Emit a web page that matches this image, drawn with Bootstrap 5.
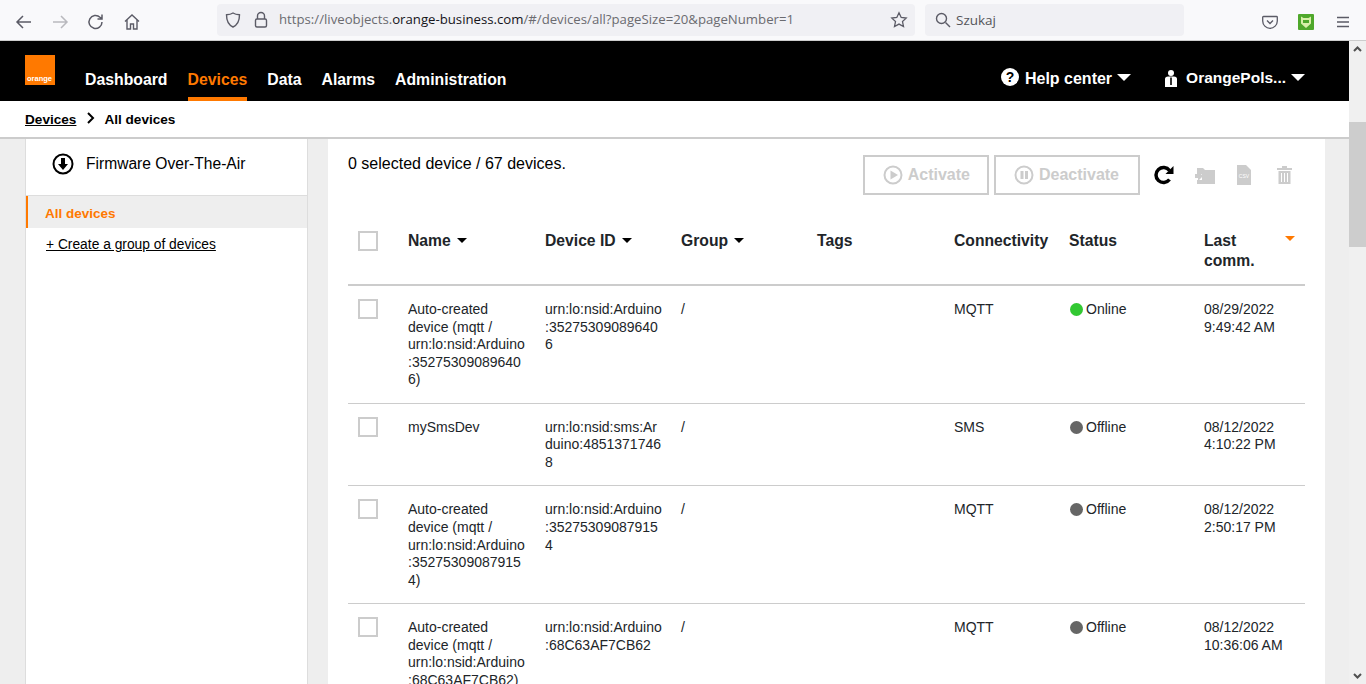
<!DOCTYPE html>
<html lang="en">
<head>
<meta charset="UTF-8">
<title>Live Objects - Devices</title>
<link href="https://cdn.jsdelivr.net/npm/bootstrap@5.3.0/dist/css/bootstrap.min.css" rel="stylesheet">
<style>
html, body { height: 684px; overflow: hidden; }
body { font-family: "Liberation Sans", Arial, sans-serif; font-size: 14px; color: #000; background: #eee; }

/* browser toolbar */
.ff-bar { height: 41px; background: #f9f9fb; border-bottom: 1px solid #ccc; padding-left: 14px; }
.ff-btn { width: 20px; height: 20px; flex: none; }
.ff-url { width: 698px; height: 32px; margin-left: 75px; margin-top: -4px; background: #f0f0f4; border-radius: 4px; font-family: "Open Sans", sans-serif; font-size: 13.2px; color: #6b6b70; padding: 0 7px; }
.ff-url b { font-weight: 400; color: #15141a; }
.ff-lock { margin-left: 11px; }
.ff-text { margin-left: 10px; }
.ff-search { width: 259px; height: 32px; margin-left: 10px; margin-top: -4px; background: #f0f0f4; border-radius: 4px; font-family: "Open Sans", sans-serif; font-size: 13.5px; color: #55555a; padding-left: 10px; }
.ff-search span { margin-left: 5px; }
.ff-green { margin-left: 20px; }
.ff-menu { margin-left: 22px; margin-right: 16px; }

/* site */
.lo-top { height: 60px; background: #000; padding-left: 25px; }
.lo-logo { width: 30px; height: 30px; background: #ff7900; margin-top: 14px; color: #fff; font-size: 7.5px; font-weight: 700; line-height: 1; padding: 0 0 3px 2px; }
.lo-nav { margin-left: 30px; }
.lo-nav a { display: block; height: 60px; padding-top: 27px; margin-right: 20px; font-size: 15.8px; font-weight: 700; color: #fff; text-decoration: none; }
.lo-nav a.on { color: #ff7900; border-bottom: 4px solid #ff7900; }
.lo-right { font-size: 16px; line-height: 20px; font-weight: 700; color: #fff; padding-top: 27px; padding-right: 44px; }
.lo-help { margin-left: 6px; margin-top: 1px; }
.lo-user { margin-left: 34px; margin-top: 2px; }
.lo-name { margin-left: 9px; font-size: 15.5px; }
.lo-caret { width: 0; height: 0; margin: 6px 0 0 5px; border-left: 7px solid transparent; border-right: 7px solid transparent; border-top: 7px solid #fff; }
.lo-crumb { height: 38px; background: #fff; border-bottom: 2px solid #ccc; padding-left: 25px; font-size: 13.6px; font-weight: 700; line-height: 37px; }
.lo-crumb a { color: #000; }
.lo-chev { margin: 10px 9px 0 10px; }
.lo-side { width: 283px; height: 545px; margin-left: 25px; background: #fff; border-left: 1px solid #ddd; border-right: 1px solid #ddd; flex: none; }
.lo-fota { height: 57px; border-bottom: 1px solid #ddd; padding: 0 0 6px 26px; font-size: 15.6px; }
.lo-fota span { margin-left: 12px; }
.lo-active { height: 32px; background: #eee; border-left: 2px solid #ff7900; padding-left: 17px; color: #ff7900; font-size: 13.5px; font-weight: 700; line-height: 35px; }
.lo-add { display: block; margin: 7px 0 0 20px; color: #000; font-size: 13.8px; }
.lo-main { width: 997px; height: 545px; margin-left: 20px; background: #fff; padding: 0 20px; flex: none; overflow: hidden; }
.lo-count { font-size: 16px; padding-top: 13px; }
.lo-tools { padding-top: 16px; }
.lo-act { height: 40px; border: 2px solid #ccc; color: #ccc; font-size: 16px; font-weight: 700; padding: 0 17px 0 18px; }
.lo-act svg { margin-right: 5px; }
.lo-act + .lo-act { margin-left: 5px; padding-right: 19px; }
.ic-reload { margin-left: 14px; }
.ic-move { margin-left: 21px; }
.ic-csv { margin-left: 22px; }
.ic-trash { margin-left: 26px; margin-right: 13px; }

.lo-grid { table-layout: fixed; width: 957px; margin: 0; }
.lo-grid col:nth-child(1) { width: 60px; }
.lo-grid col:nth-child(2) { width: 137px; }
.lo-grid col:nth-child(3) { width: 136px; }
.lo-grid col:nth-child(4) { width: 136px; }
.lo-grid col:nth-child(5) { width: 137px; }
.lo-grid col:nth-child(6) { width: 115px; }
.lo-grid col:nth-child(7) { width: 135px; }
.lo-grid col:nth-child(8) { width: 101px; }
.lo-grid td, .lo-grid th { vertical-align: top; border: 0; }
.lo-grid th { font-size: 15.7px; line-height: 19.6px; padding: 36px 0 0 0; height: 90px; border-bottom: 2px solid #ccc; }
.lo-grid td { font-size: 14px; line-height: 17.6px; padding: 15px 18px 13.8px 0; border-bottom: 1px solid #ccc; overflow-wrap: anywhere; }
.lo-box { display: block; width: 20px; height: 20px; margin: 0 0 0 10px; border: 2px solid #ccc; }
.lo-grid td .lo-box { margin-top: -2px; }
.lo-sort { display: inline-block; width: 0; height: 0; margin: 0 0 3px 2px; border-left: 5px solid transparent; border-right: 5px solid transparent; border-top: 5px solid #000; }
.lo-sort.lo-cur { float: right; margin: 5px 10px 0 0; border-top-color: #ff7900; }
.lo-dot { display: inline-block; width: 13px; height: 13px; margin: 0 3px 0 1px; border-radius: 50%; background: #666; vertical-align: -2px; }
.lo-dot.up { background: #32c832; }
.lo-scroll { width: 17px; flex: none; background: #f0f0f0; position: relative; }
.lo-thumb { display: block; width: 17px; height: 125px; margin-top: 81px; background: #cdcdcd; }
.lo-arrow { position: absolute; top: 5px; left: 4px; }
.lo-arrow.lo-down { top: auto; bottom: 5px; }
</style>
</head>
<body>

<div class="ff-bar d-flex align-items-center pt-1">
    <svg class="ff-btn" viewBox="0 0 20 20" fill="none" stroke="#5b5b66" stroke-width="1.5"><path d="M17 10H3M9 4l-6 6 6 6"/></svg>
    <svg class="ff-btn ms-3" viewBox="0 0 20 20" fill="none" stroke="#b9b9be" stroke-width="1.5"><path d="M3 10h14M11 4l6 6-6 6"/></svg>
    <svg class="ff-btn ms-3" viewBox="0 0 20 20" fill="none" stroke="#5b5b66" stroke-width="1.5"><path d="M16 10a6.500 6.500 0 1 1-2-4.700L16 7M16 2.500V7h-4.500"/></svg>
    <svg class="ff-btn ms-3" viewBox="0 0 20 20" fill="none" stroke="#5b5b66" stroke-width="1.4"><path d="M3 9.500 10 3l7 6.500M5 8v9h3.500v-5h3v5H15V8"/></svg>
    <div class="ff-url d-flex align-items-center">
        <svg width="18" height="18" viewBox="0 0 18 18" fill="none" stroke="#5b5b66" stroke-width="1.4"><path d="M9 2c2 1.300 4 1.700 6.500 1.800C15.500 10 13.500 14 9 16 4.500 14 2.500 10 2.500 3.800 5 3.700 7 3.300 9 2z"/></svg>
        <svg class="ff-lock" width="16" height="18" viewBox="0 0 16 18" fill="none" stroke="#5b5b66" stroke-width="1.4"><rect x="2.500" y="8" width="11" height="8" rx="1.500"/><path d="M4.500 8V5a3.500 3.500 0 0 1 7 0v3"/></svg>
        <span class="ff-text flex-grow-1">https://liveobjects.<b>orange-business.com</b>/#/devices/all?pageSize=20&amp;pageNumber=1</span>
        <svg width="18" height="18" viewBox="0 0 18 18" fill="none" stroke="#5b5b66" stroke-width="1.3"><path d="m9 1.800 2.200 4.700 5 .6-3.700 3.500 1 5L9 13.100l-4.500 2.500 1-5L1.800 7.100l5-.6z"/></svg>
    </div>
    <div class="ff-search d-flex align-items-center">
        <svg width="16" height="16" viewBox="0 0 16 16" fill="none" stroke="#5b5b66" stroke-width="1.4"><circle cx="6.500" cy="6.500" r="5"/><path d="m10.500 10.500 4.500 4.500"/></svg>
        <span>Szukaj</span>
    </div>
    <svg class="ms-auto" width="16" height="16" viewBox="0 0 16 16" fill="none" stroke="#5b5b66" stroke-width="1.300"><path d="M1.500 2.500h13a.8.8 0 0 1 .8.8V7A7.300 7.300 0 0 1 .7 7V3.300a.8.8 0 0 1 .8-.8z"/><path d="m5 6.500 3 3 3-3"/></svg>
    <svg class="ff-green" width="16" height="16" viewBox="0 0 16 16"><rect width="16" height="16" rx="1" fill="#4fa82b"/><path d="M3 2.500l2.500 1.500h5L13 2.500v7L8 14l-5-4.500z" fill="#d7efa8"/><rect x="5" y="6" width="6" height="3" fill="#4fa82b"/></svg>
    <svg class="ff-menu" width="14" height="14" viewBox="0 0 14 14" stroke="#5b5b66" stroke-width="1.300"><path d="M1 2.500h12M1 7h12M1 11.500h12"/></svg>
</div>

<div class="d-flex">
    <div class="flex-grow-1">
        <div class="lo-top d-flex">
            <div class="lo-logo d-flex align-items-end">orange</div>
            <div class="lo-nav d-flex">
                <a href="#">Dashboard</a>
                <a href="#" class="on">Devices</a>
                <a href="#">Data</a>
                <a href="#">Alarms</a>
                <a href="#">Administration</a>
            </div>
            <div class="lo-right ms-auto d-flex">
                <svg width="18" height="18" viewBox="0 0 18 18"><circle cx="9" cy="9" r="9" fill="#fff"/><text x="9" y="14" text-anchor="middle" font-size="14" font-weight="700" font-family="Liberation Sans" fill="#000">?</text></svg>
                <span class="lo-help">Help center</span>
                <span class="lo-caret"></span>
                <svg class="lo-user" width="12" height="17" viewBox="0 0 12 17"><circle cx="6" cy="3" r="3" fill="#fff"/><path d="M0 17V9q0-2.500 3-2.500h6q3 0 3 2.500v8z" fill="#fff"/><path d="M5.200 7.500h1.600v7.500H5.200z" fill="#000"/></svg>
                <span class="lo-name">OrangePols...</span>
                <span class="lo-caret"></span>
            </div>
        </div>
        <div class="lo-crumb d-flex">
            <a href="#">Devices</a>
            <svg class="lo-chev" width="9" height="14" viewBox="0 0 9 14" fill="none" stroke="#000" stroke-width="2"><path d="m2 2 5 5-5 5"/></svg>
            <span>All devices</span>
        </div>
        <div class="d-flex">
            <div class="lo-side">
                <div class="lo-fota d-flex align-items-center">
                    <svg width="22" height="22" viewBox="0 0 22 22" fill="none"><circle cx="11" cy="11" r="9.500" stroke="#000" stroke-width="2"/><path d="M9 5h4v6h3l-5 6-5-6h3z" fill="#000"/></svg>
                    <span>Firmware Over-The-Air</span>
                </div>
                <div class="lo-active">All devices</div>
                <a class="lo-add" href="#">+ Create a group of devices</a>
            </div>
            <div class="lo-main">
                <div class="d-flex">
                    <div class="lo-count flex-grow-1">0 selected device / 67 devices.</div>
                    <div class="lo-tools d-flex align-items-center">
                        <div class="lo-act d-flex align-items-center">
                            <svg width="20" height="20" viewBox="0 0 20 20" fill="none"><circle cx="10" cy="10" r="8.500" stroke="#ccc" stroke-width="2"/><path d="M7.500 5.500 15 10l-7.500 4.500z" fill="#ccc"/></svg>
                            Activate
                        </div>
                        <div class="lo-act d-flex align-items-center">
                            <svg width="20" height="20" viewBox="0 0 20 20" fill="none"><circle cx="10" cy="10" r="8.500" stroke="#ccc" stroke-width="2"/><path d="M6.500 6h3v8h-3zM11 6h3v8h-3z" fill="#ccc"/></svg>
                            Deactivate
                        </div>
                        <svg class="ic-reload" width="20" height="20" viewBox="0 0 20 20" fill="none"><path d="M15.500 14.500A7.500 7.500 0 1 1 15.500 5.500" stroke="#000" stroke-width="3.500"/><path d="M19.500 1v8h-8z" fill="#000"/></svg>
                        <svg class="ic-move" width="20" height="17" viewBox="0 0 20 17"><path d="M2 1h6l2 2h10v14H2v-4h5V7H2z" fill="#ccc"/><path d="M0 7h3V4l5 5-5 5v-3H0z" fill="#ccc"/></svg>
                        <svg class="ic-csv" width="14" height="20" viewBox="0 0 14 20"><path d="M0 0h9l5 5v15H0z" fill="#ccc"/><text x="7" y="13" text-anchor="middle" font-size="5" font-family="Liberation Sans" fill="#fff">CSV</text></svg>
                        <svg class="ic-trash" width="15" height="18" viewBox="0 0 15 18"><path d="M0 2h5V0h5v2h5v2H0zM1.500 5h12v13h-12z" fill="#ccc"/><path d="M4.500 7v9M7.500 7v9M10.500 7v9" stroke="#fff"/></svg>
                    </div>
                </div>
                <table class="table lo-grid">
                    <colgroup>
                        <col><col><col><col><col><col><col><col>
                    </colgroup>
                    <thead>
                        <tr>
                            <th><span class="lo-box"></span></th>
                            <th>Name <span class="lo-sort"></span></th>
                            <th>Device ID <span class="lo-sort"></span></th>
                            <th>Group <span class="lo-sort"></span></th>
                            <th>Tags</th>
                            <th>Connectivity</th>
                            <th>Status</th>
                            <th><span class="lo-sort lo-cur"></span>Last<br>comm.</th>
                        </tr>
                    </thead>
                    <tbody id="devicesBody"></tbody>
                </table>
            </div>
        </div>
    </div>
    <div class="lo-scroll">
        <svg class="lo-arrow" width="9" height="6" viewBox="0 0 9 6" fill="none" stroke="#505050" stroke-width="2"><path d="m1 5 3.500-3.500L8 5"/></svg>
        <span class="lo-thumb"></span>
        <svg class="lo-arrow lo-down" width="9" height="6" viewBox="0 0 9 6" fill="none" stroke="#505050" stroke-width="2"><path d="m1 1 3.500 3.500L8 1"/></svg>
    </div>
</div>

<script>
const devices = [
    { name: "Auto-created device (mqtt / urn:lo:nsid:Arduino:352753090896406)", id: "urn:lo:nsid:Arduino:352753090896406", conn: "MQTT", online: true, date: "08/29/2022", time: "9:49:42 AM" },
    { name: "mySmsDev", id: "urn:lo:nsid:sms:Arduino:48513717468", conn: "SMS", online: false, date: "08/12/2022", time: "4:10:22 PM" },
    { name: "Auto-created device (mqtt / urn:lo:nsid:Arduino:352753090879154)", id: "urn:lo:nsid:Arduino:352753090879154", conn: "MQTT", online: false, date: "08/12/2022", time: "2:50:17 PM" },
    { name: "Auto-created device (mqtt / urn:lo:nsid:Arduino:68C63AF7CB62)", id: "urn:lo:nsid:Arduino:68C63AF7CB62", conn: "MQTT", online: false, date: "08/12/2022", time: "10:36:06 AM" }
];

document.getElementById("devicesBody").innerHTML = devices.map(d => `
    <tr>
        <td><span class="lo-box"></span></td>
        <td>${d.name}</td>
        <td>${d.id}</td>
        <td>/</td>
        <td></td>
        <td>${d.conn}</td>
        <td><span class="lo-dot ${d.online ? "up" : ""}"></span>${d.online ? "Online" : "Offline"}</td>
        <td>${d.date}<br>${d.time}</td>
    </tr>`).join("");
</script>
<script src="https://cdn.jsdelivr.net/npm/bootstrap@5.3.0/dist/js/bootstrap.bundle.min.js"></script>
</body>
</html>
